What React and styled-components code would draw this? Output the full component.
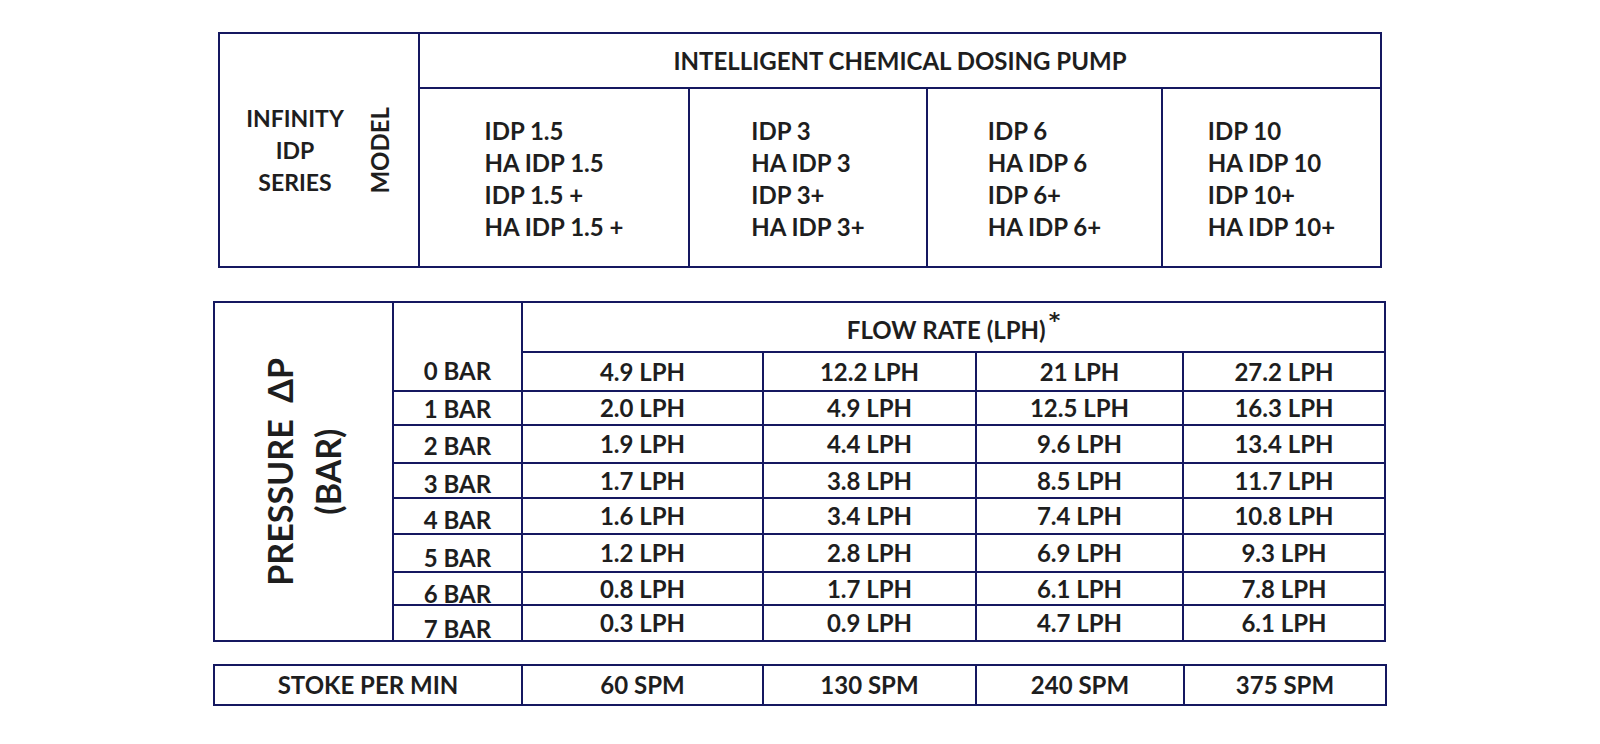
import React from "react";
import styled, { createGlobalStyle } from "styled-components";

const models = [
	["IDP 1.5", "HA IDP 1.5", "IDP 1.5 +", "HA IDP 1.5 +"],
	["IDP 3", "HA IDP 3", "IDP 3+", "HA IDP 3+"],
	["IDP 6", "HA IDP 6", "IDP 6+", "HA IDP 6+"],
	["IDP 10", "HA IDP 10", "IDP 10+", "HA IDP 10+"],
];

// one row per pressure step: label, inner row height, flow per model
const flows = [
	{ bar: "0 BAR", h: 37, values: ["4.9 LPH", "12.2 LPH", "21 LPH", "27.2 LPH"] },
	{ bar: "1 BAR", h: 32, values: ["2.0 LPH", "4.9 LPH", "12.5 LPH", "16.3 LPH"] },
	{ bar: "2 BAR", h: 36, values: ["1.9 LPH", "4.4 LPH", "9.6 LPH", "13.4 LPH"] },
	{ bar: "3 BAR", h: 33, values: ["1.7 LPH", "3.8 LPH", "8.5 LPH", "11.7 LPH"] },
	{ bar: "4 BAR", h: 34, values: ["1.6 LPH", "3.4 LPH", "7.4 LPH", "10.8 LPH"] },
	{ bar: "5 BAR", h: 36, values: ["1.2 LPH", "2.8 LPH", "6.9 LPH", "9.3 LPH"] },
	{ bar: "6 BAR", h: 31, values: ["0.8 LPH", "1.7 LPH", "6.1 LPH", "7.8 LPH"] },
	{ bar: "7 BAR", h: 34, values: ["0.3 LPH", "0.9 LPH", "4.7 LPH", "6.1 LPH"] },
];

const strokes = ["60 SPM", "130 SPM", "240 SPM", "375 SPM"];

const flowRows = "48px " + flows.map((f) => f.h + "px").join(" ");

export default function App() {
	return (
		<>
			<GlobalStyle />
			<Page>
				<Grid $offset={5} $cols="198px 268px 236px 233px 217px" $rows="53px 177px">
					<Cell $row="1 / span 2">
						<SeriesGroup>
							<SeriesName>
								INFINITY
								<br />
								IDP
								<br />
								SERIES
							</SeriesName>
							<Vertical $size={24}>MODEL</Vertical>
						</SeriesGroup>
					</Cell>
					<Cell $col="2 / span 4">INTELLIGENT CHEMICAL DOSING PUMP</Cell>
					{models.map((list) => (
						<Cell key={list[0]}>
							<ModelList>
								{list.map((m) => (
									<div key={m}>{m}</div>
								))}
							</ModelList>
						</Cell>
					))}
				</Grid>

				<Grid $gap={33} $cols="177px 127px 239px 211px 205px 200px" $rows={flowRows}>
					<Cell $row={`1 / span ${flows.length + 1}`}>
						<Vertical $size={34} $lh={48}>
							PRESSURE&nbsp;&nbsp;ΔP
							<br />
							(BAR)
						</Vertical>
					</Cell>
					<BarCell $row="1 / span 2" $first>
						{flows[0].bar}
					</BarCell>
					<Cell $col="3 / span 4">
						<HeaderText>
							FLOW RATE (LPH)<Star>*</Star>
						</HeaderText>
					</Cell>
					{flows.map((row, i) => (
						<React.Fragment key={row.bar}>
							{i > 0 && <BarCell $nudge={Math.round(i * 0.9)}>{row.bar}</BarCell>}
							{row.values.map((v, j) => (
								<Cell key={j} $col={String(j + 3)}>
									{v}
								</Cell>
							))}
						</React.Fragment>
					))}
				</Grid>

				<Grid $gap={22} $cols="306px 239px 211px 206px 200px" $rows="38px">
					<Cell>STOKE PER MIN</Cell>
					{strokes.map((s) => (
						<Cell key={s}>{s}</Cell>
					))}
				</Grid>
			</Page>
		</>
	);
}

const GlobalStyle = createGlobalStyle`
	body {
		margin: 0;
		background: #fff;
		font-family: Lato, "Open Sans", sans-serif;
		color: #1e1e1e;
	}
`;

const Page = styled.div`
	width: 1600px;
	height: 744px;
	padding: 32px 0 0 213px;
	box-sizing: border-box;
	display: flex;
	flex-direction: column;
	align-items: flex-start;
	overflow: hidden;
`;

// the navy background shows through the 2px gaps as the ruling lines
const Grid = styled.div`
	display: grid;
	grid-template-columns: ${(p) => p.$cols};
	grid-template-rows: ${(p) => p.$rows};
	gap: 2px;
	padding: 2px;
	background: #151860;
	margin-left: ${(p) => p.$offset || 0}px;
	margin-top: ${(p) => p.$gap || 0}px;
	font-weight: 700;
	font-size: 24px;
	line-height: 1;
	color: #1e1e1e;
`;

const Cell = styled.div`
	background: #fff;
	display: flex;
	align-items: center;
	justify-content: center;
	text-align: center;
	grid-column: ${(p) => p.$col || "auto"};
	grid-row: ${(p) => p.$row || "auto"};
`;

const BarCell = styled(Cell)`
	grid-column: 2;
	align-items: ${(p) => (p.$first ? "flex-end" : "center")};
	padding-bottom: ${(p) => (p.$first ? 7 : 0)}px;
	padding-top: ${(p) => (p.$nudge || 0) * 2}px;
`;

const SeriesGroup = styled.div`
	display: flex;
	align-items: center;
	justify-content: center;
	gap: 24px;
`;

const SeriesName = styled.div`
	font-size: 23px;
	line-height: 32px;
	text-align: center;
`;

const Vertical = styled.div`
	writing-mode: vertical-rl;
	transform: rotate(180deg);
	font-size: ${(p) => p.$size}px;
	line-height: ${(p) => p.$lh || p.$size}px;
	text-align: center;
	white-space: nowrap;
`;

const ModelList = styled.div`
	text-align: left;
	line-height: 32px;
	padding-top: 2px;
`;

const HeaderText = styled.div`
	padding-top: 6px;
	white-space: nowrap;
`;

const Star = styled.span`
	display: inline-block;
	font-family: "DejaVu Sans", sans-serif;
	font-size: 22px;
	line-height: 1;
	margin-left: 3px;
	position: relative;
	top: -11px;
`;
